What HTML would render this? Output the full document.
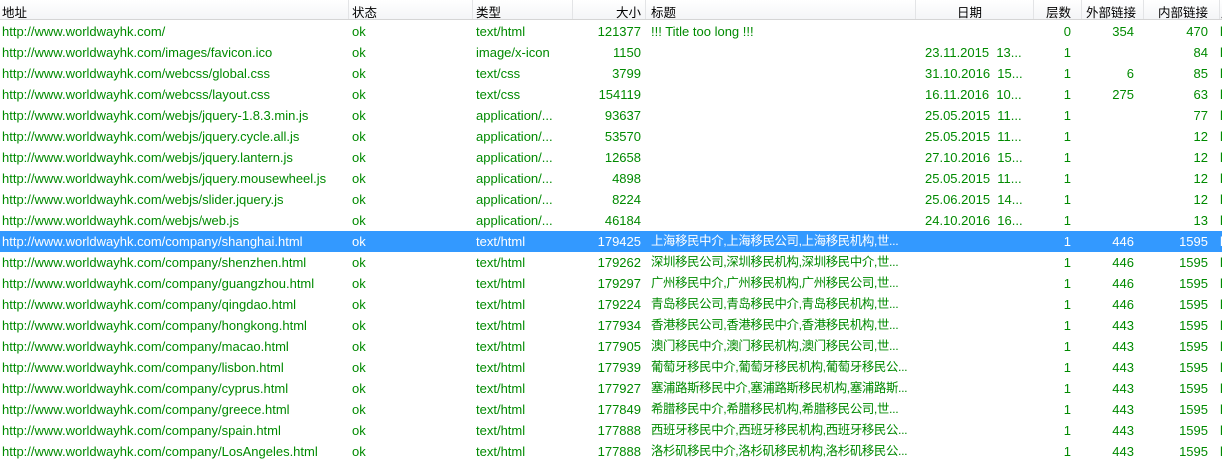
<!DOCTYPE html><html><head><meta charset="utf-8"><style>
body{margin:0;width:1222px;height:460px;overflow:hidden;background:#fff;font:13px "Liberation Sans","Noto Sans CJK SC",sans-serif;color:#008a00}
.hd{position:absolute;left:0;top:0;width:1222px;height:19px;background:linear-gradient(#fff,#f4f5f7);border-bottom:1px solid #d5d5d5;color:#000}
.hd div{position:absolute;top:2px;font-size:12.5px}
.sep{position:absolute;top:0;width:1px;height:19px;background:#e3e4e6}
.r{position:absolute;left:0;width:1222px;height:21px}
.r div{position:absolute;top:3px;white-space:nowrap;line-height:15px}
.sel{background:#3399ff;color:#fff}
.rt{text-align:right}
</style></head><body>
<div class="hd">
<div style="left:2px">地址</div><div style="left:352px">状态</div><div style="left:476px">类型</div>
<div style="left:600px;width:41px" class="rt">大小</div><div style="left:651px">标题</div>
<div style="left:957px">日期</div><div style="left:1040px;width:31px" class="rt">层数</div>
<div style="left:1084px;width:52px" class="rt">外部链接</div><div style="left:1150px;width:58px" class="rt">内部链接</div>
<div style="left:1221px">周</div>
<span class="sep" style="left:348px"></span><span class="sep" style="left:472px"></span><span class="sep" style="left:572px"></span><span class="sep" style="left:645px"></span><span class="sep" style="left:915px"></span><span class="sep" style="left:1033px"></span><span class="sep" style="left:1081px"></span><span class="sep" style="left:1143px"></span><span class="sep" style="left:1219px"></span>
</div>
<div id="rows"></div>
<script>
var d=[
["http://www.worldwayhk.com/","text/html","121377","!!! Title too long !!!","","0","354","470"],
["http://www.worldwayhk.com/images/favicon.ico","image/x-icon","1150","","23.11.2015  13...","1","","84"],
["http://www.worldwayhk.com/webcss/global.css","text/css","3799","","31.10.2016  15...","1","6","85"],
["http://www.worldwayhk.com/webcss/layout.css","text/css","154119","","16.11.2016  10...","1","275","63"],
["http://www.worldwayhk.com/webjs/jquery-1.8.3.min.js","application/...","93637","","25.05.2015  11...","1","","77"],
["http://www.worldwayhk.com/webjs/jquery.cycle.all.js","application/...","53570","","25.05.2015  11...","1","","12"],
["http://www.worldwayhk.com/webjs/jquery.lantern.js","application/...","12658","","27.10.2016  15...","1","","12"],
["http://www.worldwayhk.com/webjs/jquery.mousewheel.js","application/...","4898","","25.05.2015  11...","1","","12"],
["http://www.worldwayhk.com/webjs/slider.jquery.js","application/...","8224","","25.06.2015  14...","1","","12"],
["http://www.worldwayhk.com/webjs/web.js","application/...","46184","","24.10.2016  16...","1","","13"],
["http://www.worldwayhk.com/company/shanghai.html","text/html","179425","上海移民中介,上海移民公司,上海移民机构,世...","","1","446","1595"],
["http://www.worldwayhk.com/company/shenzhen.html","text/html","179262","深圳移民公司,深圳移民机构,深圳移民中介,世...","","1","446","1595"],
["http://www.worldwayhk.com/company/guangzhou.html","text/html","179297","广州移民中介,广州移民机构,广州移民公司,世...","","1","446","1595"],
["http://www.worldwayhk.com/company/qingdao.html","text/html","179224","青岛移民公司,青岛移民中介,青岛移民机构,世...","","1","446","1595"],
["http://www.worldwayhk.com/company/hongkong.html","text/html","177934","香港移民公司,香港移民中介,香港移民机构,世...","","1","443","1595"],
["http://www.worldwayhk.com/company/macao.html","text/html","177905","澳门移民中介,澳门移民机构,澳门移民公司,世...","","1","443","1595"],
["http://www.worldwayhk.com/company/lisbon.html","text/html","177939","葡萄牙移民中介,葡萄牙移民机构,葡萄牙移民公...","","1","443","1595"],
["http://www.worldwayhk.com/company/cyprus.html","text/html","177927","塞浦路斯移民中介,塞浦路斯移民机构,塞浦路斯...","","1","443","1595"],
["http://www.worldwayhk.com/company/greece.html","text/html","177849","希腊移民中介,希腊移民机构,希腊移民公司,世...","","1","443","1595"],
["http://www.worldwayhk.com/company/spain.html","text/html","177888","西班牙移民中介,西班牙移民机构,西班牙移民公...","","1","443","1595"],
["http://www.worldwayhk.com/company/LosAngeles.html","text/html","177888","洛杉矶移民中介,洛杉矶移民机构,洛杉矶移民公...","","1","443","1595"]];
var h="";d.forEach(function(r,i){var t=i==0?'font-size:13px':'font-size:12.4px;letter-spacing:-0.35px';h+='<div class="r'+(i==10?' sel':'')+'" style="top:'+(21+i*21)+'px"><div style="left:2px">'+r[0]+'</div><div style="left:352px">ok</div><div style="left:476px">'+r[1]+'</div><div class="rt" style="left:570px;width:71px">'+r[2]+'</div><div style="left:651px;'+t+'">'+r[3]+'</div><div style="left:925px;white-space:pre">'+r[4]+'</div><div class="rt" style="left:1040px;width:31px">'+r[5]+'</div><div class="rt" style="left:1086px;width:48px">'+r[6]+'</div><div class="rt" style="left:1150px;width:58px">'+r[7]+'</div><div style="left:1220px">l</div></div>'});
document.getElementById("rows").innerHTML=h;
</script>
</body></html>
